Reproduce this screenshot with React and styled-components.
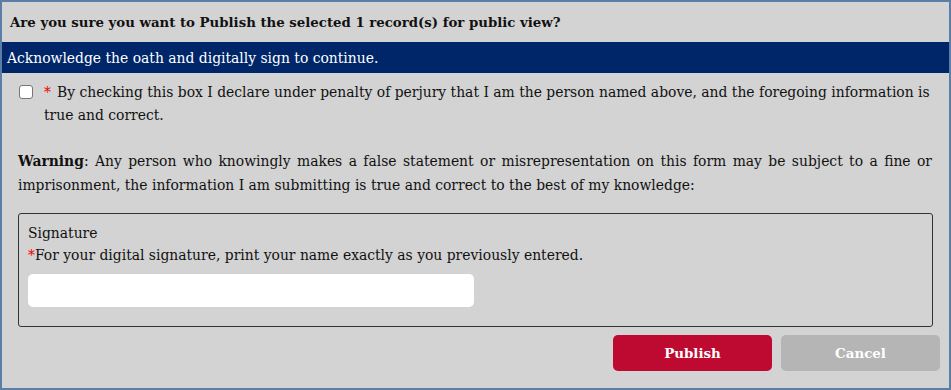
import styled, { createGlobalStyle } from "styled-components";

const GlobalStyle = createGlobalStyle`
  html, body {
    margin: 0;
    padding: 0;
    background: #ffffff;
  }
  * {
    box-sizing: border-box;
  }
`;

const Dialog = styled.div`
  width: 951px;
  height: 390px;
  background-color: #d3d3d3;
  border: 2px solid #5b7ea6;
  font-family: "DejaVu Serif", "Liberation Serif", serif;
  font-size: 13.9px;
  color: #111;
  display: flex;
  flex-direction: column;
`;
const Title = styled.div`
  height: 40px;
  padding: 0 8px;
  display: flex;
  align-items: center;
  font-weight: bold;
  font-size: 13.3px;
`;
const Band = styled.div`
  height: 31px;
  padding: 0 5px;
  display: flex;
  align-items: center;
  background-color: #00266a;
  color: white;
`;
const Body = styled.div`
  padding: 8px 16px 0 16px;
  display: flex;
  flex-direction: column;
`;
const CheckRow = styled.label`
  display: flex;
  align-items: flex-start;
  line-height: 23px;
`;
const Box = styled.span`
  flex-shrink: 0;
  width: 14px;
  height: 14px;
  margin: 4px 11px 0 1px;
  border: 1px solid #767676;
  border-radius: 3px;
  background: white;
`;
const Star = styled.span`
  color: #e00;
  margin-right: ${(props) => props.gap || "0"};
`;
const Paragraph = styled.p`
  margin: 22px 0 0 0;
  line-height: 24px;
  text-align: justify;
  padding-right: 1px;
`;
const Fieldset = styled.div`
  margin-top: 16px;
  border: 1px solid #333;
  border-radius: 3px;
  padding: 10px 10px 19px 9px;
  display: flex;
  flex-direction: column;
  gap: 4px;
  line-height: 18px;
`;
const Input = styled.div`
  margin-top: 6px;
  width: 446px;
  height: 33px;
  background: white;
  border-radius: 5px;
`;
const Actions = styled.div`
  display: flex;
  justify-content: flex-end;
  gap: 9px;
  padding: 8px 9px 0 0;
`;
const Button = styled.button`
  width: 159px;
  height: 36px;
  border: none;
  border-radius: 5px;
  background-color: ${(props) => (props.primary ? "#be0a30" : "#b5b5b5")};
  color: white;
  font-family: "DejaVu Serif", "Liberation Serif", serif;
  font-size: 13.4px;
  font-weight: bold;
`;

export default function App() {
  return (
    <>
      <GlobalStyle />
      <Dialog>
        <Title>Are you sure you want to Publish the selected 1 record(s) for public view?</Title>
        <Band>Acknowledge the oath and digitally sign to continue.</Band>
        <Body>
          <CheckRow>
            <Box />
            <span>
              <Star gap="6px">*</Star>
              By checking this box I declare under penalty of perjury that I am the person named above, and the foregoing information is true and correct.
            </span>
          </CheckRow>
          <Paragraph>
            <b>Warning</b>: Any person who knowingly makes a false statement or misrepresentation on this form may be subject to a fine or imprisonment, the information I am submitting is true and correct to the best of my knowledge:
          </Paragraph>
          <Fieldset>
            <div>Signature</div>
            <div>
              <Star>*</Star>For your digital signature, print your name exactly as you previously entered.
            </div>
            <Input />
          </Fieldset>
        </Body>
        <Actions>
          <Button primary>Publish</Button>
          <Button>Cancel</Button>
        </Actions>
      </Dialog>
    </>
  );
}
